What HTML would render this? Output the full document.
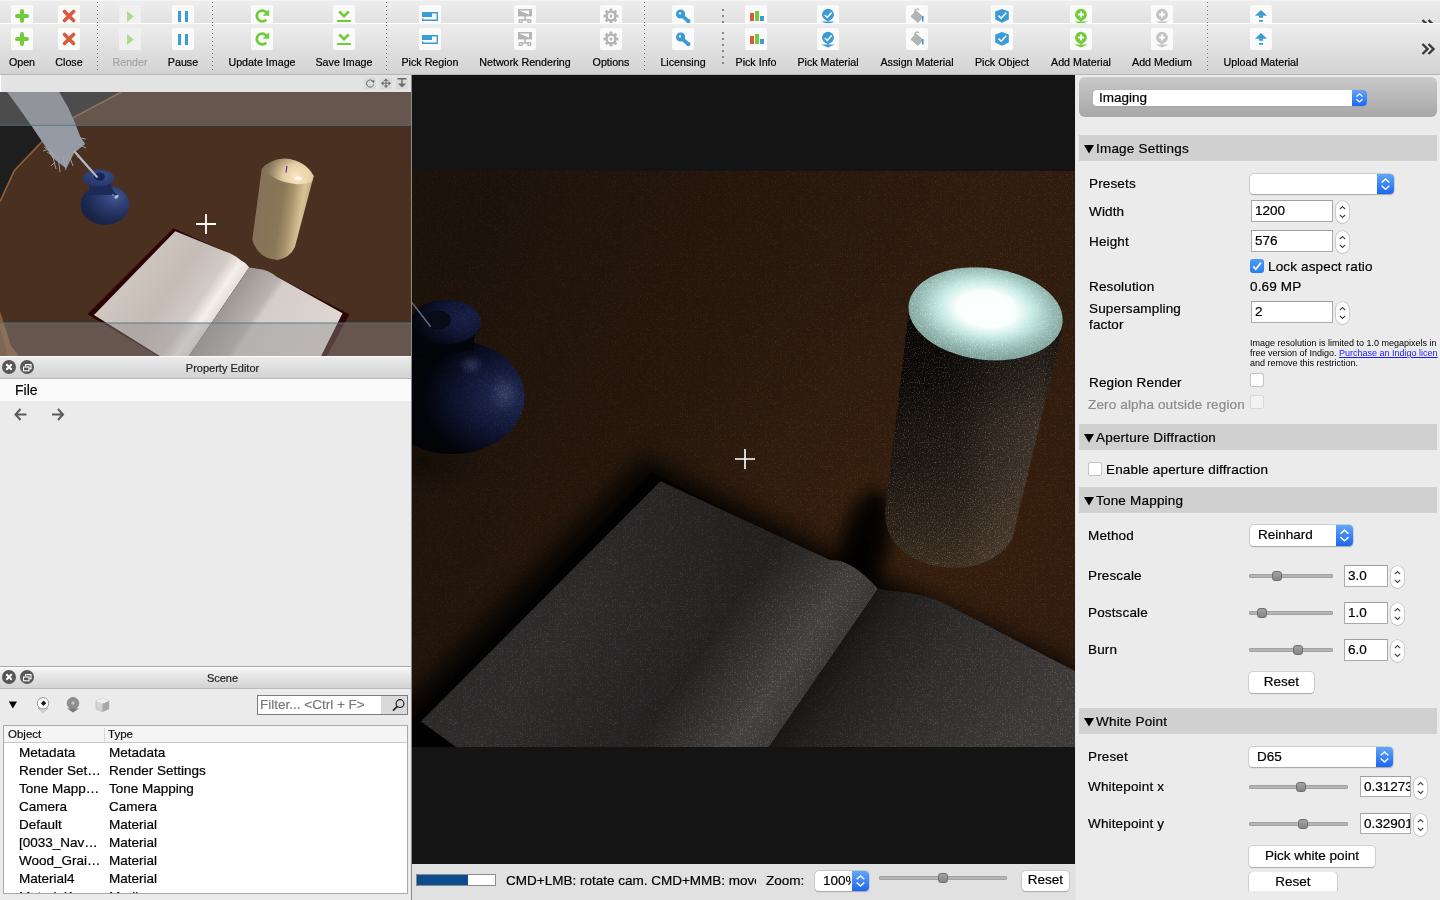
<!DOCTYPE html>
<html><head><meta charset="utf-8">
<style>
*{box-sizing:border-box;margin:0;padding:0}
html,body{width:1440px;height:900px;overflow:hidden;background:#ebebeb;font-family:"Liberation Sans",sans-serif;color:#000;-webkit-text-stroke-width:0.2px}
.a{position:absolute}
/* toolbar */
.tbwrap{position:absolute;left:0;width:1440px;overflow:hidden}
.tb{position:absolute;left:0;top:0;width:1440px;height:50px;background:linear-gradient(#ededed,#d3d3d3)}
.ib{position:absolute;top:4px;width:22px;height:22px;background:#fafafa;border-radius:2px}
.ib.dis{background:#f0f0f0}
.lb{position:absolute;top:32px;font-size:10.7px;white-space:nowrap;transform:translateX(-50%);line-height:13px}
.sep{position:absolute;top:1px;width:1px;height:46px;background:repeating-linear-gradient(#777 0 1px,transparent 1px 4px)}
.ib svg{position:absolute;left:0;top:0}
.sep2{position:absolute;top:8px;width:2px;height:32px;background:repeating-linear-gradient(#8a8a8a 0 2px,transparent 2px 6px)}

.gbox{position:absolute;left:1079px;top:77px;width:358px;height:40px;border-radius:6px;background:linear-gradient(#c9c9c9,#a7a7a7)}
.cb{position:absolute;background:#fff;border-radius:4px;box-shadow:0 0 0 0.5px #b8b8b8,0 0.5px 1px #999;font-size:13.5px;overflow:hidden}
.cbb{position:absolute;right:0;top:0;bottom:0;background:linear-gradient(#62a6f9,#1c66f2)}
.cbb svg{position:absolute;left:0;top:0}
.in{position:absolute;background:#fff;border:1px solid #ababab;border-top-color:#9f9f9f;font-size:13.5px;overflow:hidden;white-space:nowrap}
.in span{position:absolute;left:3px;top:2px;line-height:16px}
.sp{position:absolute;width:13px;height:22px;background:#fff;border-radius:6.5px;box-shadow:0 0 0 0.6px #bdbdbd,0 0.5px 1px #aaa}
.sp svg{position:absolute;left:0;top:0}
.sl{position:absolute;height:4px;background:#b5b5b5;border:0.5px solid #a2a2a2;border-radius:1px}
.th{position:absolute;width:10px;height:10px;border-radius:3px;background:linear-gradient(#a3a3a3,#858585);border:1px solid #6f6f6f}
.ck{position:absolute;width:14px;height:14px;border-radius:3px;background:#fff;box-shadow:inset 0 0 0 0.7px #b0b0b0}
.ck.dis{background:#f2f2f2;box-shadow:inset 0 0 0 0.7px #cfcfcf}
.ck.on{background:linear-gradient(#4b9bf8,#2a7cf4);box-shadow:none}
.ck svg{position:absolute;left:0;top:0}
.bt{position:absolute;background:#fff;border-radius:4px;box-shadow:0 0 0 0.6px #bdbdbd,0 0.6px 1px #9a9a9a;font-size:13.5px;text-align:center}
.rl{position:absolute;font-size:13.5px;line-height:16px;white-space:nowrap;letter-spacing:0.15px}
.sh{position:absolute;left:1079px;width:358px;height:26px;background:#d0d0d0;font-size:13.5px;letter-spacing:0.2px}
.sh .tri{position:absolute;left:5px;top:9px}
.sh span{position:absolute;left:17px;top:5.5px;line-height:16px}
.small{position:absolute;font-size:9px;line-height:10px;white-space:nowrap;-webkit-text-stroke-width:0}

.pt{position:absolute;left:0;width:445px;text-align:center;font-size:11px;line-height:14px;color:#222}
.th2{position:absolute;font-size:11.5px;line-height:16px;color:#111}
.tr{position:absolute;font-size:13.5px;line-height:17px;white-space:nowrap}
</style></head><body>

<!-- top clipped toolbar copy -->
<div class="tbwrap" style="top:0;height:23px;border-top:1px solid #f4f4f4">
 <div class="tb" id="tb1" style="top:0px"><div class="ib" style="left:11px"><svg width="22" height="22" viewBox="0 0 22 22"><path d="M11 6V16M6 11H16" stroke="#72cc3a" stroke-width="4" stroke-linecap="round"/></svg></div><div class="lb" style="left:22px">Open</div><div class="ib" style="left:58px"><svg width="22" height="22" viewBox="0 0 22 22"><path d="M6.5 6.5L15.5 15.5M15.5 6.5L6.5 15.5" stroke="#d85a3c" stroke-width="3.6" stroke-linecap="round"/></svg></div><div class="lb" style="left:69px">Close</div><div class="ib dis" style="left:119px"><svg width="22" height="22" viewBox="0 0 22 22"><path d="M8 6L15 11.5L8 17Z" fill="#acdc8c"/></svg></div><div class="lb" style="left:130px;color:#a5a5a5">Render</div><div class="ib" style="left:172px"><svg width="22" height="22" viewBox="0 0 22 22"><path d="M6 6h3v11H6zM13 6h3v11h-3z" fill="#3a9bd5"/></svg></div><div class="lb" style="left:183px">Pause</div><div class="ib" style="left:251px"><svg width="22" height="22" viewBox="0 0 22 22"><path d="M15.2 14.6A5.4 5.4 0 1 1 15.6 7.8" stroke="#72cc3a" stroke-width="2.8" fill="none"/><path d="M18.2 4.2V10.8H11.6Z" fill="#72cc3a"/></svg></div><div class="lb" style="left:262px">Update Image</div><div class="ib" style="left:333px"><svg width="22" height="22" viewBox="0 0 22 22"><path d="M6.3 6.5L11 11.2L15.7 6.5" stroke="#72cc3a" stroke-width="2.6" fill="none"/><path d="M4 15h14v2H4z" fill="#72cc3a"/></svg></div><div class="lb" style="left:344px">Save Image</div><div class="ib" style="left:419px"><svg width="22" height="22" viewBox="0 0 22 22"><path d="M3 7h10v5H3z" fill="#3a9bd5"/><path d="M13 7.7H18.3V15.3H3.7V13.5" stroke="#3a9bd5" stroke-width="1.4" fill="none"/></svg></div><div class="lb" style="left:430px">Pick Region</div><div class="ib" style="left:514px"><svg width="22" height="22" viewBox="0 0 22 22"><path d="M4 4h14v7.4H4z" fill="#b4b4b4"/><path d="M5 5.5L15 9.5V5.5Z" fill="#fafafa"/><path d="M10.2 11h1.6v4h-1.6zM6 14.3h10v1.4H6z" fill="#b4b4b4"/><path d="M4.7 14.3h4v3.6h-4zM13.3 14.3h4v3.6h-4z" fill="#b4b4b4"/><path d="M6 15.5h1.4v1.2H6zM14.6 15.5h1.4v1.2h-1.4z" fill="#fafafa"/></svg></div><div class="lb" style="left:525px">Network Rendering</div><div class="ib" style="left:600px"><svg width="22" height="22" viewBox="0 0 22 22"><g fill="#b4b4b4"><circle cx="11" cy="11" r="5.6"/><g id="t"><rect x="9.6" y="3.6" width="2.8" height="14.8"/></g><rect x="9.6" y="3.6" width="2.8" height="14.8" transform="rotate(45 11 11)"/><rect x="9.6" y="3.6" width="2.8" height="14.8" transform="rotate(90 11 11)"/><rect x="9.6" y="3.6" width="2.8" height="14.8" transform="rotate(135 11 11)"/></g><circle cx="11" cy="11" r="3.2" fill="#fafafa"/><circle cx="11" cy="11" r="1.5" fill="#b4b4b4"/></svg></div><div class="lb" style="left:611px">Options</div><div class="ib" style="left:672px"><svg width="22" height="22" viewBox="0 0 22 22"><circle cx="8.6" cy="9" r="4.6" fill="#3a9bd5"/><path d="M10.5 11.2L17.5 17.2" stroke="#3a9bd5" stroke-width="3.6"/><rect x="14.5" y="14.5" width="3.6" height="3.2" fill="#3a9bd5"/><circle cx="8" cy="8.4" r="1.1" fill="#fff"/></svg></div><div class="lb" style="left:683px">Licensing</div><div class="ib" style="left:745px"><svg width="22" height="22" viewBox="0 0 22 22"><path d="M5 8h4v8H5z" fill="#d85a3c"/><path d="M10 6h4v10h-4z" fill="#72cc3a"/><path d="M15 11h4v5h-4z" fill="#3a9bd5"/></svg></div><div class="lb" style="left:756px">Pick Info</div><div class="ib" style="left:817px"><svg width="22" height="22" viewBox="0 0 22 22"><circle cx="11" cy="9.6" r="5.9" fill="#3a9bd5"/><path d="M4.3 16.4H17.7L11 19.4Z" fill="#3a9bd5"/><path d="M8.2 14L11 17L13.8 14Z" fill="#3a9bd5"/><path d="M7.8 10L10.3 12.5L14.6 7.6" stroke="#fff" stroke-width="1.5" fill="none"/></svg></div><div class="lb" style="left:828px">Pick Material</div><div class="ib" style="left:906px"><svg width="22" height="22" viewBox="0 0 22 22"><path d="M10 5.8L17 12L12 17.6L5 11.4Z" fill="#b4b4b4" stroke="#b4b4b4" stroke-width="1" stroke-linejoin="round"/><path d="M9.2 7.2A2.2 2.2 0 0 1 13 5" stroke="#b4b4b4" stroke-width="1.3" fill="none"/><path d="M16 11h1.6v5.5H16z" fill="#3a9bd5"/></svg></div><div class="lb" style="left:917px">Assign Material</div><div class="ib" style="left:991px"><svg width="22" height="22" viewBox="0 0 22 22"><path d="M11 4L17.8 6.6V14.6L11 17.8L4.2 14.6V6.6Z" fill="#3a9bd5"/><path d="M7.5 10.6L10.2 13.2L15.2 7.8" stroke="#fff" stroke-width="1.5" fill="none"/></svg></div><div class="lb" style="left:1002px">Pick Object</div><div class="ib" style="left:1070px"><svg width="22" height="22" viewBox="0 0 22 22"><circle cx="11" cy="9.6" r="5.9" fill="#72cc3a"/><path d="M4.3 16.4H17.7L11 19.4Z" fill="#72cc3a"/><path d="M8.2 14L11 17L13.8 14Z" fill="#72cc3a"/><path d="M11 6.6V12.4M8.1 9.5H13.9" stroke="#fff" stroke-width="1.8"/></svg></div><div class="lb" style="left:1081px">Add Material</div><div class="ib" style="left:1151px"><svg width="22" height="22" viewBox="0 0 22 22"><circle cx="11" cy="9.6" r="5.9" fill="#c4c4c4"/><path d="M4.3 16.4H17.7L11 19.4Z" fill="#c4c4c4"/><path d="M8.2 14L11 17L13.8 14Z" fill="#c4c4c4"/><path d="M11 6.6V12.4M8.1 9.5H13.9" stroke="#fff" stroke-width="1.8"/></svg></div><div class="lb" style="left:1162px">Add Medium</div><div class="ib" style="left:1250px"><svg width="22" height="22" viewBox="0 0 22 22"><path d="M11 5L5 10.8H17Z" fill="#3a9bd5"/><path d="M9 10.5h4v2.3H9zM9 15h4v1.8H9z" fill="#3a9bd5"/></svg></div><div class="lb" style="left:1261px">Upload Material</div><div class="sep" style="left:97px"></div><div class="sep" style="left:212px"></div><div class="sep" style="left:386px"></div><div class="sep" style="left:644px"></div><div class="sep" style="left:1207px"></div><div class="sep2" style="left:722px"></div></div>
</div>
<div class="a" style="left:0;top:23px;width:1440px;height:1px;background:#fff"></div>
<div class="tbwrap" style="top:24px;height:51px">
 <div class="tb" id="tb2" style="top:0;border-bottom:1px solid #b5b5b5;height:51px"><div class="ib" style="left:11px"><svg width="22" height="22" viewBox="0 0 22 22"><path d="M11 6V16M6 11H16" stroke="#72cc3a" stroke-width="4" stroke-linecap="round"/></svg></div><div class="lb" style="left:22px">Open</div><div class="ib" style="left:58px"><svg width="22" height="22" viewBox="0 0 22 22"><path d="M6.5 6.5L15.5 15.5M15.5 6.5L6.5 15.5" stroke="#d85a3c" stroke-width="3.6" stroke-linecap="round"/></svg></div><div class="lb" style="left:69px">Close</div><div class="ib dis" style="left:119px"><svg width="22" height="22" viewBox="0 0 22 22"><path d="M8 6L15 11.5L8 17Z" fill="#acdc8c"/></svg></div><div class="lb" style="left:130px;color:#a5a5a5">Render</div><div class="ib" style="left:172px"><svg width="22" height="22" viewBox="0 0 22 22"><path d="M6 6h3v11H6zM13 6h3v11h-3z" fill="#3a9bd5"/></svg></div><div class="lb" style="left:183px">Pause</div><div class="ib" style="left:251px"><svg width="22" height="22" viewBox="0 0 22 22"><path d="M15.2 14.6A5.4 5.4 0 1 1 15.6 7.8" stroke="#72cc3a" stroke-width="2.8" fill="none"/><path d="M18.2 4.2V10.8H11.6Z" fill="#72cc3a"/></svg></div><div class="lb" style="left:262px">Update Image</div><div class="ib" style="left:333px"><svg width="22" height="22" viewBox="0 0 22 22"><path d="M6.3 6.5L11 11.2L15.7 6.5" stroke="#72cc3a" stroke-width="2.6" fill="none"/><path d="M4 15h14v2H4z" fill="#72cc3a"/></svg></div><div class="lb" style="left:344px">Save Image</div><div class="ib" style="left:419px"><svg width="22" height="22" viewBox="0 0 22 22"><path d="M3 7h10v5H3z" fill="#3a9bd5"/><path d="M13 7.7H18.3V15.3H3.7V13.5" stroke="#3a9bd5" stroke-width="1.4" fill="none"/></svg></div><div class="lb" style="left:430px">Pick Region</div><div class="ib" style="left:514px"><svg width="22" height="22" viewBox="0 0 22 22"><path d="M4 4h14v7.4H4z" fill="#b4b4b4"/><path d="M5 5.5L15 9.5V5.5Z" fill="#fafafa"/><path d="M10.2 11h1.6v4h-1.6zM6 14.3h10v1.4H6z" fill="#b4b4b4"/><path d="M4.7 14.3h4v3.6h-4zM13.3 14.3h4v3.6h-4z" fill="#b4b4b4"/><path d="M6 15.5h1.4v1.2H6zM14.6 15.5h1.4v1.2h-1.4z" fill="#fafafa"/></svg></div><div class="lb" style="left:525px">Network Rendering</div><div class="ib" style="left:600px"><svg width="22" height="22" viewBox="0 0 22 22"><g fill="#b4b4b4"><circle cx="11" cy="11" r="5.6"/><g id="t"><rect x="9.6" y="3.6" width="2.8" height="14.8"/></g><rect x="9.6" y="3.6" width="2.8" height="14.8" transform="rotate(45 11 11)"/><rect x="9.6" y="3.6" width="2.8" height="14.8" transform="rotate(90 11 11)"/><rect x="9.6" y="3.6" width="2.8" height="14.8" transform="rotate(135 11 11)"/></g><circle cx="11" cy="11" r="3.2" fill="#fafafa"/><circle cx="11" cy="11" r="1.5" fill="#b4b4b4"/></svg></div><div class="lb" style="left:611px">Options</div><div class="ib" style="left:672px"><svg width="22" height="22" viewBox="0 0 22 22"><circle cx="8.6" cy="9" r="4.6" fill="#3a9bd5"/><path d="M10.5 11.2L17.5 17.2" stroke="#3a9bd5" stroke-width="3.6"/><rect x="14.5" y="14.5" width="3.6" height="3.2" fill="#3a9bd5"/><circle cx="8" cy="8.4" r="1.1" fill="#fff"/></svg></div><div class="lb" style="left:683px">Licensing</div><div class="ib" style="left:745px"><svg width="22" height="22" viewBox="0 0 22 22"><path d="M5 8h4v8H5z" fill="#d85a3c"/><path d="M10 6h4v10h-4z" fill="#72cc3a"/><path d="M15 11h4v5h-4z" fill="#3a9bd5"/></svg></div><div class="lb" style="left:756px">Pick Info</div><div class="ib" style="left:817px"><svg width="22" height="22" viewBox="0 0 22 22"><circle cx="11" cy="9.6" r="5.9" fill="#3a9bd5"/><path d="M4.3 16.4H17.7L11 19.4Z" fill="#3a9bd5"/><path d="M8.2 14L11 17L13.8 14Z" fill="#3a9bd5"/><path d="M7.8 10L10.3 12.5L14.6 7.6" stroke="#fff" stroke-width="1.5" fill="none"/></svg></div><div class="lb" style="left:828px">Pick Material</div><div class="ib" style="left:906px"><svg width="22" height="22" viewBox="0 0 22 22"><path d="M10 5.8L17 12L12 17.6L5 11.4Z" fill="#b4b4b4" stroke="#b4b4b4" stroke-width="1" stroke-linejoin="round"/><path d="M9.2 7.2A2.2 2.2 0 0 1 13 5" stroke="#b4b4b4" stroke-width="1.3" fill="none"/><path d="M16 11h1.6v5.5H16z" fill="#3a9bd5"/></svg></div><div class="lb" style="left:917px">Assign Material</div><div class="ib" style="left:991px"><svg width="22" height="22" viewBox="0 0 22 22"><path d="M11 4L17.8 6.6V14.6L11 17.8L4.2 14.6V6.6Z" fill="#3a9bd5"/><path d="M7.5 10.6L10.2 13.2L15.2 7.8" stroke="#fff" stroke-width="1.5" fill="none"/></svg></div><div class="lb" style="left:1002px">Pick Object</div><div class="ib" style="left:1070px"><svg width="22" height="22" viewBox="0 0 22 22"><circle cx="11" cy="9.6" r="5.9" fill="#72cc3a"/><path d="M4.3 16.4H17.7L11 19.4Z" fill="#72cc3a"/><path d="M8.2 14L11 17L13.8 14Z" fill="#72cc3a"/><path d="M11 6.6V12.4M8.1 9.5H13.9" stroke="#fff" stroke-width="1.8"/></svg></div><div class="lb" style="left:1081px">Add Material</div><div class="ib" style="left:1151px"><svg width="22" height="22" viewBox="0 0 22 22"><circle cx="11" cy="9.6" r="5.9" fill="#c4c4c4"/><path d="M4.3 16.4H17.7L11 19.4Z" fill="#c4c4c4"/><path d="M8.2 14L11 17L13.8 14Z" fill="#c4c4c4"/><path d="M11 6.6V12.4M8.1 9.5H13.9" stroke="#fff" stroke-width="1.8"/></svg></div><div class="lb" style="left:1162px">Add Medium</div><div class="ib" style="left:1250px"><svg width="22" height="22" viewBox="0 0 22 22"><path d="M11 5L5 10.8H17Z" fill="#3a9bd5"/><path d="M9 10.5h4v2.3H9zM9 15h4v1.8H9z" fill="#3a9bd5"/></svg></div><div class="lb" style="left:1261px">Upload Material</div><div class="sep" style="left:97px"></div><div class="sep" style="left:212px"></div><div class="sep" style="left:386px"></div><div class="sep" style="left:644px"></div><div class="sep" style="left:1207px"></div><div class="sep2" style="left:722px"></div></div>
</div>

<!-- LEFT PANEL -->
<div class="a" style="left:0;top:75px;width:411px;height:17px;background:#e3e3e3;border-left:1px solid #fff"></div>
<div class="a" style="left:411px;top:75px;width:1px;height:825px;background:#8a8a8a"></div>
<div class="a" id="vp" style="left:0;top:92px;width:411px;height:264px;background:#4a3020;overflow:hidden"></div>
<svg class="a" style="left:0;top:92px" width="411" height="264" viewBox="0 0 411 264">
<defs>
 <linearGradient id="cand" gradientUnits="userSpaceOnUse" x1="254" y1="110" x2="308" y2="118">
  <stop offset="0" stop-color="#84715a"/><stop offset="0.5" stop-color="#8a7757"/><stop offset="0.68" stop-color="#a8926c"/><stop offset="0.88" stop-color="#d8c295"/><stop offset="1" stop-color="#c2ac82"/>
 </linearGradient>
 <radialGradient id="candtop" gradientUnits="userSpaceOnUse" cx="298" cy="84" r="30">
  <stop offset="0" stop-color="#fbe9c4" stop-opacity="1"/><stop offset="0.45" stop-color="#ecd6aa" stop-opacity="0.9"/><stop offset="1" stop-color="#d8c298" stop-opacity="0"/>
 </radialGradient>
 <radialGradient id="ink2" cx="0.7" cy="0.3" r="0.8">
  <stop offset="0" stop-color="#44578e"/><stop offset="0.35" stop-color="#2c3d72"/><stop offset="0.75" stop-color="#1c2850"/><stop offset="1" stop-color="#162040"/>
 </radialGradient>
 <radialGradient id="inkn" cx="0.6" cy="0.3" r="0.8">
  <stop offset="0" stop-color="#3a4c86"/><stop offset="1" stop-color="#233366"/>
 </radialGradient>
 <linearGradient id="pg1" gradientUnits="userSpaceOnUse" x1="165.2" y1="112.8" x2="251.9" y2="172">
  <stop offset="0" stop-color="#d0c8c2"/><stop offset="0.5" stop-color="#c5bcb6"/><stop offset="0.78" stop-color="#d2cac5"/><stop offset="0.9" stop-color="#f5f0ec"/><stop offset="1" stop-color="#e4ddd8"/>
 </linearGradient>
 <linearGradient id="pg2" gradientUnits="userSpaceOnUse" x1="251.9" y1="172" x2="337" y2="230">
  <stop offset="0" stop-color="#9d9793"/><stop offset="0.3" stop-color="#bab3af"/><stop offset="0.36" stop-color="#d4cdc8"/><stop offset="1" stop-color="#ddd6d1"/>
 </linearGradient>
</defs>
<rect width="411" height="264" fill="#4a3020"/>
<path d="M0 0 H121.5 L72.6 26 L45.8 45.7 L14.2 78.8 L0 109.6Z" fill="#1e1e1e"/>
<path d="M121.5 0 L72.6 26 L45.8 45.7 L14.2 78.8 L0 109.6" fill="none" stroke="#8e6038" stroke-width="1.6"/>
<path d="M0 219.3 L3.3 229.5 L11 253.7 L19 264 H0Z" fill="#8a5a34"/><path d="M0 236 L4 250 L8 264 H0Z" fill="#5a3c28" opacity="0.5"/>
<!-- quill -->
<path d="M7.1 0 H59.2 L67.9 14.9 L74.2 29.1 L80.5 44.9 L85.2 52 L74.2 60.7 L66.3 76.5 L52.1 65.4 L44.2 52.8 L31.6 33.9 L15.8 11.8Z" fill="#959aa4"/>
<path d="M44 55 L56 64 M47 60 L57 66 M52 61 L56 77 M58 64 L60 80 M63 64 L66 78 M69 63 L73 74 M78 52 L86 56 M80 46 L86 47 M49 57 L43 59 M55 70 L51 74 M75 60 L79 66" stroke="#a0a5ae" stroke-width="0.9"/>
<path d="M74.2 59.1 L97.8 86" stroke="#b2b6be" stroke-width="2"/>
<!-- inkwell -->
<ellipse cx="105" cy="112.8" rx="24.5" ry="20" fill="url(#ink2)"/>
<path d="M85 87 Q92 94 88 103 L118 103 Q108 96 113 87Z" fill="#1d2a58"/>
<ellipse cx="98.6" cy="86" rx="15.6" ry="8.6" fill="url(#inkn)"/>
<ellipse cx="99.4" cy="84.6" rx="5.5" ry="4" fill="#182452"/>
<path d="M74.2 59.1 L97.5 85.5" stroke="#b2b6be" stroke-width="2"/>
<ellipse cx="116.5" cy="104.8" rx="2.4" ry="1.6" fill="#a8b6dc" transform="rotate(-30 116.5 104.8)"/>
<ellipse cx="113" cy="103" rx="1.2" ry="0.8" fill="#8898c4"/>
<!-- candle -->
<path d="M261.7 76.9 Q270 67 284.8 66.5 Q305 68 313.7 84.1 L294.9 154.9 Q290 166 277.6 167.9 Q258 167 252.3 147.7 Z" fill="url(#cand)"/>
<clipPath id="candclip"><path d="M261.7 76.9 Q270 67 284.8 66.5 Q305 68 313.7 84.1 L294.9 154.9 Q290 166 277.6 167.9 Q258 167 252.3 147.7 Z"/></clipPath>
<g clip-path="url(#candclip)"><ellipse cx="290" cy="78" rx="27" ry="13" transform="rotate(14 290 78)" fill="url(#candtop)"/></g>
<ellipse cx="298.4" cy="86.3" rx="3.6" ry="1.9" fill="#fffaf0"/>
<path d="M287 74 L286 80.5" stroke="#5a20a8" stroke-width="1.1"/>
<!-- book -->
<path d="M173.3 136.2 L87.4 222.3 L157.8 264 H326.9 L349.3 222.3 L276.4 184.4 L249.2 175.6 L223.9 159.1Z" fill="#2c0505"/>
<path d="M175.3 139.3 L94 222.9 L159.7 264 H188.9 L249.2 175.6 Q245 170 241.4 168.8 Q234 162 223.9 159.1 Z" fill="url(#pg1)"/>
<path d="M249.2 175.6 L188.9 264 H321.1 L342.5 221.3 L276.4 184.4 Q268 178 258.9 177 Z" fill="url(#pg2)"/>
<!-- overlay bands -->
<rect x="0" y="0" width="411" height="33" fill="#8c8c8c" opacity="0.42"/>
<rect x="0" y="231" width="411" height="33" fill="#8c8c8c" opacity="0.42"/>
<path d="M0 33.3H411M0 231H411" stroke="#4f7584" stroke-width="0.9"/>
<path d="M206 122V142M196 132H216" stroke="#fff" stroke-width="1.8"/>
</svg>

<!-- property editor -->
<div class="a" style="left:0;top:356px;width:411px;height:1px;background:#fff"></div>
<div class="a" style="left:0;top:357px;width:411px;height:22px;background:linear-gradient(#ececec,#d2d2d2);border-bottom:1px solid #b9b9b9"></div>
<div class="a" style="left:0;top:379px;width:411px;height:22px;background:#fafafa"></div>
<div class="a" style="left:15px;top:382px;font-size:14px">File</div>

<!-- scene -->
<div class="a" style="left:0;top:666px;width:411px;height:1px;background:#a8a8a8"></div>
<div class="a" style="left:0;top:667px;width:411px;height:22px;background:linear-gradient(#f4f4f4,#d2d2d2);border-top:1px solid #fff;border-bottom:1px solid #b9b9b9"></div>
<div class="a" style="left:3px;top:725px;width:405px;height:169px;background:#fff;border:1px solid #a9a9a9"></div>

<svg class="a" style="left:363px;top:77px" width="47" height="13" viewBox="0 0 47 13"><rect x="1" y="0.5" width="12" height="11.5" rx="1" fill="#dadada"/><rect x="17" y="0.5" width="12" height="11.5" rx="1" fill="#dadada"/><rect x="33" y="0.5" width="12" height="11.5" rx="1" fill="#dadada"/><path d="M10.2 4.6A3.6 3.6 0 1 0 10.6 7.6" stroke="#6a6a6a" stroke-width="1" fill="none"/><path d="M8.4 4.2L11.4 3L11 6.2Z" fill="#6a6a6a"/><path d="M23 1.5L25.3 4H20.7ZM23 11L25.3 8.5H20.7ZM18 6.2L20.5 3.9V8.5ZM28 6.2L25.5 3.9V8.5Z" fill="#6a6a6a"/><path d="M20 6.2H26M23 3V9.5" stroke="#6a6a6a" stroke-width="1"/><path d="M34.5 1.8H43.5M39 2V9" stroke="#6a6a6a" stroke-width="1.4"/><path d="M35 6.5H43L39 10.5Z" fill="#6a6a6a"/></svg><svg class="a" style="left:1px;top:359px" width="36" height="16" viewBox="0 0 36 16"><circle cx="8" cy="8" r="7" fill="#575757"/><path d="M5.3 5.3L10.7 10.7M10.7 5.3L5.3 10.7" stroke="#fff" stroke-width="2"/><circle cx="26" cy="8" r="7" fill="#575757"/><rect x="22.5" y="8" width="5.5" height="3.8" fill="none" stroke="#fff" stroke-width="1.1"/><path d="M24.5 7.6V5.6H30V9.6H28.4" fill="none" stroke="#fff" stroke-width="1.1"/></svg><div class="pt" style="top:361px">Property Editor</div><svg class="a" style="left:14px;top:408px" width="52" height="13" viewBox="0 0 52 13"><path d="M1.5 6.5H12.5M6.5 1L1.5 6.5L6.5 12" stroke="#5a5a5a" stroke-width="2" fill="none"/><path d="M38 6.5H49M44 1L49 6.5L44 12" stroke="#5a5a5a" stroke-width="2" fill="none"/></svg><svg class="a" style="left:1px;top:669px" width="36" height="16" viewBox="0 0 36 16"><circle cx="8" cy="8" r="7" fill="#575757"/><path d="M5.3 5.3L10.7 10.7M10.7 5.3L5.3 10.7" stroke="#fff" stroke-width="2"/><circle cx="26" cy="8" r="7" fill="#575757"/><rect x="22.5" y="8" width="5.5" height="3.8" fill="none" stroke="#fff" stroke-width="1.1"/><path d="M24.5 7.6V5.6H30V9.6H28.4" fill="none" stroke="#fff" stroke-width="1.1"/></svg><div class="pt" style="top:671px">Scene</div><svg class="a" style="left:8px;top:697px" width="104" height="17" viewBox="0 0 104 17"><path d="M0.8 4.5H9L4.9 11.5Z" fill="#000"/><path d="M30 11.2L35 15.5L40 11.2Z" fill="#dcdcdc" stroke="#a0a0a0" stroke-width="0.6"/><circle cx="35" cy="6.3" r="5.7" fill="#fcfcfc" stroke="#8f8f8f" stroke-width="0.9"/><path d="M35.8 3.6L38.2 6.2L35.4 8.9L32.9 6.3Z" fill="#1a1a1a"/><path d="M59 11.5L65 15.5L71 11.5Z" fill="#7a7a7a"/><circle cx="65" cy="6.3" r="5.8" fill="#8f8f8f" stroke="#777" stroke-width="0.7"/><path d="M65 4L67 6L65 8L63 6Z" fill="#c4c4c4"/><path d="M88 4L94.5 1.3L101 4V12L94.5 14.7L88 12Z" fill="#d4d4d4" stroke="#b3b3b3" stroke-width="0.6"/><path d="M88 4L94.5 6.7L101 4L94.5 1.3Z" fill="#eeeeee"/><path d="M94.5 6.7V14.7L101 12V4Z" fill="#a8a8a8"/></svg><div class="a" style="left:257px;top:695px;width:151px;height:20px;background:#fff;border:1px solid #7c7c7c"></div><div class="a" style="left:381px;top:696px;width:26px;height:18px;background:#d9d9d9"></div><div class="a" style="left:260px;top:697px;font-size:13.5px;line-height:16px;color:#787878;white-space:nowrap">Filter... &lt;Ctrl + F&gt;</div><svg class="a" style="left:390px;top:697px" width="16" height="16" viewBox="0 0 16 16"><circle cx="10" cy="6.6" r="3.9" fill="none" stroke="#222" stroke-width="1.2"/><path d="M7.3 9.4L3 13.6" stroke="#222" stroke-width="1.6"/></svg><div class="a" style="left:4px;top:726px;width:403px;height:17px;background:#f5f5f5;border-bottom:1px solid #c9c9c9"></div><div class="a" style="left:104px;top:728px;width:1px;height:13px;background:#d8d8d8"></div><div class="th2" style="left:8px;top:726px">Object</div><div class="th2" style="left:108px;top:726px">Type</div><div class="a" style="left:4px;top:743px;width:403px;height:150px;overflow:hidden"><div class="tr" style="left:15px;top:0.5px">Metadata</div><div class="tr" style="left:105px;top:0.5px">Metadata</div><div class="tr" style="left:15px;top:18.5px">Render Set…</div><div class="tr" style="left:105px;top:18.5px">Render Settings</div><div class="tr" style="left:15px;top:36.5px">Tone Mapp…</div><div class="tr" style="left:105px;top:36.5px">Tone Mapping</div><div class="tr" style="left:15px;top:54.5px">Camera</div><div class="tr" style="left:105px;top:54.5px">Camera</div><div class="tr" style="left:15px;top:72.5px">Default</div><div class="tr" style="left:105px;top:72.5px">Material</div><div class="tr" style="left:15px;top:90.5px">[0033_Nav…</div><div class="tr" style="left:105px;top:90.5px">Material</div><div class="tr" style="left:15px;top:108.5px">Wood_Grai…</div><div class="tr" style="left:105px;top:108.5px">Material</div><div class="tr" style="left:15px;top:126.5px">Material4</div><div class="tr" style="left:105px;top:126.5px">Material</div><div class="tr" style="left:15px;top:144.5px">Material1</div><div class="tr" style="left:105px;top:144.5px">Medium</div></div>
<!-- CENTER -->
<div class="a" style="left:412px;top:75px;width:663px;height:789px;background:#141414"></div>
<div class="a" id="rv" style="left:412px;top:171px;width:663px;height:576px;background:#24160b;overflow:hidden"></div>
<svg class="a" style="left:412px;top:171px" width="663" height="576" viewBox="0 0 663 576">
<defs>
 <linearGradient id="wood" x1="0" y1="0.2" x2="1" y2="0.6">
  <stop offset="0" stop-color="#23160c"/><stop offset="0.4" stop-color="#2f1d0f"/><stop offset="0.75" stop-color="#3c2413"/><stop offset="1" stop-color="#3a2213"/>
 </linearGradient>
 <radialGradient id="woodlight" cx="0.8" cy="0.62" r="0.45">
  <stop offset="0" stop-color="#4a2a10" stop-opacity="0.5"/><stop offset="1" stop-color="#4a2a10" stop-opacity="0"/>
 </radialGradient>
 <radialGradient id="ink" cx="0.88" cy="0.5" r="0.8">
  <stop offset="0" stop-color="#283362"/><stop offset="0.25" stop-color="#1b244d"/><stop offset="0.5" stop-color="#0d1330"/><stop offset="0.72" stop-color="#03050c"/><stop offset="1" stop-color="#010203"/>
 </radialGradient>
 <radialGradient id="inkneck" cx="0.78" cy="0.4" r="0.85">
  <stop offset="0" stop-color="#1e2856"/><stop offset="0.45" stop-color="#131a3e"/><stop offset="0.8" stop-color="#070a18"/><stop offset="1" stop-color="#020308"/>
 </radialGradient>
 <radialGradient id="ctop" cx="0.5" cy="0.45" r="0.55">
  <stop offset="0" stop-color="#ffffff"/><stop offset="0.35" stop-color="#fafffd"/><stop offset="0.55" stop-color="#cfeee8"/><stop offset="0.8" stop-color="#a8c6c0"/><stop offset="1" stop-color="#94b0aa"/>
 </radialGradient>
 <linearGradient id="cbody" gradientUnits="userSpaceOnUse" x1="470" y1="0" x2="650" y2="0">
  <stop offset="0" stop-color="#14100d"/><stop offset="0.42" stop-color="#1d1814"/><stop offset="0.62" stop-color="#362d26"/><stop offset="0.88" stop-color="#4a3f35"/><stop offset="1" stop-color="#352b23"/>
 </linearGradient>
 <linearGradient id="cbodyv" gradientUnits="userSpaceOnUse" x1="0" y1="150" x2="0" y2="400">
  <stop offset="0" stop-color="#000" stop-opacity="0.6"/><stop offset="0.28" stop-color="#000" stop-opacity="0.25"/><stop offset="0.55" stop-color="#6a5440" stop-opacity="0.12"/><stop offset="1" stop-color="#8a6a4a" stop-opacity="0.42"/>
 </linearGradient>
 <linearGradient id="page1" gradientUnits="userSpaceOnUse" x1="263.4" y1="181.8" x2="511" y2="352.7">
  <stop offset="0" stop-color="#363433"/><stop offset="0.2" stop-color="#3a3837"/><stop offset="0.64" stop-color="#2d2b2a"/><stop offset="0.9" stop-color="#57534f"/><stop offset="1" stop-color="#4a4644"/>
 </linearGradient>
 <linearGradient id="page1v" gradientUnits="userSpaceOnUse" x1="0" y1="310" x2="0" y2="576">
  <stop offset="0" stop-color="#000" stop-opacity="0.15"/><stop offset="0.5" stop-color="#000" stop-opacity="0"/>
 </linearGradient>
 <linearGradient id="page2" gradientUnits="userSpaceOnUse" x1="511" y1="352.7" x2="682.8" y2="471.2">
  <stop offset="0" stop-color="#1e1c1b"/><stop offset="0.15" stop-color="#2c2a29"/><stop offset="0.45" stop-color="#3c3938"/><stop offset="1" stop-color="#4e4a48"/>
 </linearGradient>
 <radialGradient id="cshadow" cx="0.5" cy="0.5" r="0.5">
  <stop offset="0" stop-color="#000" stop-opacity="0.6"/><stop offset="1" stop-color="#000" stop-opacity="0"/>
 </radialGradient>
 <linearGradient id="bkshadow" gradientUnits="userSpaceOnUse" x1="300" y1="330" x2="270" y2="270">
  <stop offset="0" stop-color="#000" stop-opacity="0.45"/><stop offset="1" stop-color="#000" stop-opacity="0"/>
 </linearGradient>
 <filter id="grain" x="0" y="0" width="100%" height="100%">
  <feTurbulence type="turbulence" baseFrequency="1.6" numOctaves="1" seed="7" result="n"/>
  <feColorMatrix type="matrix" values="2.2 0 0 0 -0.6  2.2 0 0 0 -0.6  2.2 0 0 0 -0.6  0 0 0 0 1" in="n"/>
 </filter>
 <filter id="grainw" x="0" y="0" width="100%" height="100%">
  <feTurbulence type="fractalNoise" baseFrequency="0.8" numOctaves="1" seed="11" result="n"/>
  <feColorMatrix type="matrix" values="0 0 0 0 0.75  0 0 0 0 0.55  0 0 0 0 0.38  0 0 0 3 -1.6" in="n"/>
 </filter>
 <clipPath id="cclip"><path d="M496.6 143 L473.5 336 Q470 382 523 395 Q575 404 600 369 L650 160 Z"/></clipPath>
 <clipPath id="bclip"><path d="M248.6 310.3 L9 550.6 L0 576 L663 576 L663 500 L529.5 431 Q515 425 497 421.7 Q480 420 466 418 Q440 388 418 389 Z"/></clipPath>
 <radialGradient id="hl"><stop offset="0" stop-color="#56628f" stop-opacity="0.55"/><stop offset="1" stop-color="#56628f" stop-opacity="0"/></radialGradient>
 <filter id="blur12" x="-20%" y="-20%" width="140%" height="140%"><feGaussianBlur stdDeviation="11"/></filter>
 <filter id="blur8" x="-50%" y="-50%" width="200%" height="200%"><feGaussianBlur stdDeviation="8"/></filter>
</defs>
<rect width="663" height="576" fill="url(#wood)"/>
<rect width="663" height="576" fill="url(#woodlight)"/>
<!-- table shadows -->
<ellipse cx="452" cy="375" rx="24" ry="58" transform="rotate(15 452 375)" fill="#000" opacity="0.9" filter="url(#blur8)"/>
<path d="M-20 545 L232 285 L470 405 L663 495 V576 H-20Z" fill="#000" opacity="0.85" filter="url(#blur12)"/>
<ellipse cx="10" cy="290" rx="70" ry="35" fill="url(#cshadow)" opacity="0.6"/>
<!-- inkwell -->
<ellipse cx="40" cy="226" rx="72.5" ry="57" fill="url(#ink)"/>
<path d="M0 150 H69 Q60 166 62 180 L0 184Z" fill="#04060d"/>
<ellipse cx="34" cy="151" rx="35" ry="22.5" fill="url(#inkneck)"/>
<ellipse cx="26" cy="149" rx="13" ry="9.5" fill="#090d1c"/>
<path d="M0 131.6L18.6 155.7" stroke="#7d8494" stroke-width="1.5"/>
<ellipse cx="59" cy="194" rx="12" ry="10" fill="url(#hl)"/><ellipse cx="92" cy="222" rx="16" ry="20" fill="url(#hl)"/>
<!-- book cover + pages -->
<path d="M239.5 301 L-5 556 L0 576 L663 576 L663 507 L529 437 L466 420 Z" fill="#030202"/>
<path d="M248.6 310.3 L9 550.6 L44 576 L357 576 L466 418 Q440 388 418 389 Z" fill="url(#page1)"/>
<path d="M248.6 310.3 L9 550.6 L44 576 L357 576 L466 418 Q440 388 418 389 Z" fill="url(#page1v)"/>
<path d="M466 418 Q480 420 497 421.7 Q515 425 529.5 431 L663 500 L663 576 L357 576 Z" fill="url(#page2)"/>

<!-- candle -->
<path d="M496.6 143 L473.5 336 Q470 382 523 395 Q575 404 600 369 L650 160 Z" fill="url(#cbody)"/>
<path d="M496.6 143 L473.5 336 Q470 382 523 395 Q575 404 600 369 L650 160 Z" fill="url(#cbodyv)"/>
<g clip-path="url(#cclip)"><rect width="663" height="576" filter="url(#grainw)" opacity="0.4"/></g>
<ellipse cx="573.6" cy="142.8" rx="77.5" ry="46" transform="rotate(7 573.6 142.8)" fill="url(#ctop)"/>
<rect width="663" height="576" filter="url(#grain)" opacity="0.22" style="mix-blend-mode:overlay"/>
<path d="M333 278V298M323 288H343" stroke="#fff" stroke-width="1.6"/>
</svg>
<div class="a" style="left:412px;top:864px;width:663px;height:36px;background:#e1e1e1"></div>
<div class="a" style="left:416px;top:874px;width:80px;height:12px;background:#fff;border:1px solid #8a8a8a"></div><div class="a" style="left:417px;top:875px;width:51px;height:10px;background:#0b4a8c"></div><div class="a" style="left:506px;top:872px;width:250px;height:17px;overflow:hidden;white-space:nowrap;font-size:13.5px;line-height:17px">CMD+LMB: rotate cam. CMD+MMB: move cam.</div><div class="a" style="left:766px;top:872px;font-size:13.5px;line-height:17px">Zoom:</div><div class="cb" style="left:815px;top:871px;width:54px;height:20px"><span style="position:absolute;left:8px;top:1.5px;line-height:16px"></span><div class="cbb" style="width:17px"><svg width="17" height="20" viewBox="0 0 17 20"><path d="M4.69 8.29L8.50 4.86L12.31 8.29M4.69 11.52L8.50 14.95L12.31 11.52" stroke="#fff" stroke-width="1.43" fill="none"/></svg></div></div><div class="a" style="left:823px;top:872px;width:28px;height:17px;overflow:hidden;white-space:nowrap;font-size:13.5px;line-height:17px">100%</div><div class="sl" style="left:879px;top:876px;width:128px"></div><div class="th" style="left:937.5px;top:873px"></div><div class="bt" style="left:1022px;top:871px;width:47px;height:20px;line-height:18px">Reset</div>

<!-- RIGHT -->
<div class="a" style="left:1075px;top:75px;width:1px;height:825px;background:#e6e6e6"></div>
<div class="a" style="left:1076px;top:75px;width:364px;height:825px;background:#ebebeb"></div>
<div class="gbox"></div><div class="cb" style="left:1093px;top:90px;width:274px;height:16px"><span style="position:absolute;left:6px;top:-0.5px;line-height:16px">Imaging</span><div class="cbb" style="width:15px"><svg width="15" height="16" viewBox="0 0 15 16"><path d="M4.45 6.63L7.50 3.89L10.55 6.63M4.45 9.22L7.50 11.96L10.55 9.22" stroke="#fff" stroke-width="1.27" fill="none"/></svg></div></div><div class="sh" style="top:135px"><svg class="tri" width="10" height="10" viewBox="0 0 10 10"><path d="M0 1H10L5 9.5Z" fill="#000"/></svg><span>Image Settings</span></div><div class="rl" style="left:1089px;top:175.6px">Presets</div><div class="cb" style="left:1250px;top:173.5px;width:144px;height:20.5px"><span style="position:absolute;left:8px;top:1.75px;line-height:16px"></span><div class="cbb" style="width:17px"><svg width="17" height="20.5" viewBox="0 0 17 20.5"><path d="M4.60 8.49L8.50 4.98L12.40 8.49M4.60 11.81L8.50 15.33L12.40 11.81" stroke="#fff" stroke-width="1.46" fill="none"/></svg></div></div><div class="rl" style="left:1089px;top:203.6px">Width</div><div class="in" style="left:1251px;top:200px;width:82px;height:22px"><span>1200</span></div><div class="sp" style="left:1336px;top:201px"><svg width="13" height="22" viewBox="0 0 13 22"><path d="M3.8 8.2L6.5 5.5L9.2 8.2M3.8 13.8L6.5 16.5L9.2 13.8" stroke="#444" stroke-width="1.2" fill="none"/></svg></div><div class="rl" style="left:1089px;top:233.6px">Height</div><div class="in" style="left:1251px;top:230px;width:82px;height:22px"><span>576</span></div><div class="sp" style="left:1336px;top:231px"><svg width="13" height="22" viewBox="0 0 13 22"><path d="M3.8 8.2L6.5 5.5L9.2 8.2M3.8 13.8L6.5 16.5L9.2 13.8" stroke="#444" stroke-width="1.2" fill="none"/></svg></div><div class="ck on" style="left:1250px;top:259px"><svg width="14" height="14" viewBox="0 0 14 14"><path d="M3.2 7.4L5.8 10.2L11 3.6" stroke="#fff" stroke-width="1.7" fill="none"/></svg></div><div class="rl" style="left:1268px;top:258.6px">Lock aspect ratio</div><div class="rl" style="left:1089px;top:278.6px">Resolution</div><div class="rl" style="left:1250px;top:278.6px">0.69 MP</div><div class="rl" style="left:1089px;top:300.6px">Supersampling</div><div class="rl" style="left:1089px;top:316.6px">factor</div><div class="in" style="left:1251px;top:301px;width:82px;height:22px"><span>2</span></div><div class="sp" style="left:1336px;top:302px"><svg width="13" height="22" viewBox="0 0 13 22"><path d="M3.8 8.2L6.5 5.5L9.2 8.2M3.8 13.8L6.5 16.5L9.2 13.8" stroke="#444" stroke-width="1.2" fill="none"/></svg></div><div class="small" style="left:1250px;top:338px">Image resolution is limited to 1.0 megapixels in<br>free version of Indigo. <u style="color:#1a1aff">Purchase an Indigo licen</u><br>and remove this restriction.</div><div class="rl" style="left:1089px;top:374.6px">Region Render</div><div class="ck" style="left:1250px;top:373px"></div><div class="rl" style="left:1088px;top:396.6px;color:#8c8c8c">Zero alpha outside region</div><div class="ck dis" style="left:1250px;top:395px"></div><div class="sh" style="top:424px"><svg class="tri" width="10" height="10" viewBox="0 0 10 10"><path d="M0 1H10L5 9.5Z" fill="#000"/></svg><span>Aperture Diffraction</span></div><div class="ck" style="left:1088px;top:462px"></div><div class="rl" style="left:1106px;top:461.6px">Enable aperture diffraction</div><div class="sh" style="top:487px"><svg class="tri" width="10" height="10" viewBox="0 0 10 10"><path d="M0 1H10L5 9.5Z" fill="#000"/></svg><span>Tone Mapping</span></div><div class="rl" style="left:1088px;top:527.6px">Method</div><div class="cb" style="left:1250px;top:525px;width:103px;height:21px"><span style="position:absolute;left:8px;top:2.0px;line-height:16px">Reinhard</span><div class="cbb" style="width:17px"><svg width="17" height="21" viewBox="0 0 17 21"><path d="M4.50 8.70L8.50 5.10L12.50 8.70M4.50 12.10L8.50 15.70L12.50 12.10" stroke="#fff" stroke-width="1.50" fill="none"/></svg></div></div><div class="rl" style="left:1088px;top:568.1px">Prescale</div><div class="sl" style="left:1249px;top:573.5px;width:84px"></div><div class="th" style="left:1272px;top:570.5px"></div><div class="in" style="left:1344px;top:565px;width:44px;height:22px"><span>3.0</span></div><div class="sp" style="left:1391px;top:566px"><svg width="13" height="22" viewBox="0 0 13 22"><path d="M3.8 8.2L6.5 5.5L9.2 8.2M3.8 13.8L6.5 16.5L9.2 13.8" stroke="#444" stroke-width="1.2" fill="none"/></svg></div><div class="rl" style="left:1088px;top:605.1px">Postscale</div><div class="sl" style="left:1249px;top:610.5px;width:84px"></div><div class="th" style="left:1256.5px;top:607.5px"></div><div class="in" style="left:1344px;top:602px;width:44px;height:22px"><span>1.0</span></div><div class="sp" style="left:1391px;top:603px"><svg width="13" height="22" viewBox="0 0 13 22"><path d="M3.8 8.2L6.5 5.5L9.2 8.2M3.8 13.8L6.5 16.5L9.2 13.8" stroke="#444" stroke-width="1.2" fill="none"/></svg></div><div class="rl" style="left:1088px;top:642.1px">Burn</div><div class="sl" style="left:1249px;top:647.5px;width:84px"></div><div class="th" style="left:1292.5px;top:644.5px"></div><div class="in" style="left:1344px;top:639px;width:44px;height:22px"><span>6.0</span></div><div class="sp" style="left:1391px;top:640px"><svg width="13" height="22" viewBox="0 0 13 22"><path d="M3.8 8.2L6.5 5.5L9.2 8.2M3.8 13.8L6.5 16.5L9.2 13.8" stroke="#444" stroke-width="1.2" fill="none"/></svg></div><div class="bt" style="left:1249px;top:672px;width:65px;height:21px;line-height:19px">Reset</div><div class="sh" style="top:708px"><svg class="tri" width="10" height="10" viewBox="0 0 10 10"><path d="M0 1H10L5 9.5Z" fill="#000"/></svg><span>White Point</span></div><div class="rl" style="left:1088px;top:748.6px">Preset</div><div class="cb" style="left:1249px;top:747px;width:144px;height:20px"><span style="position:absolute;left:8px;top:1.5px;line-height:16px">D65</span><div class="cbb" style="width:17px"><svg width="17" height="20" viewBox="0 0 17 20"><path d="M4.69 8.29L8.50 4.86L12.31 8.29M4.69 11.52L8.50 14.95L12.31 11.52" stroke="#fff" stroke-width="1.43" fill="none"/></svg></div></div><div class="rl" style="left:1088px;top:779.1px">Whitepoint x</div><div class="sl" style="left:1249px;top:784.5px;width:99px"></div><div class="th" style="left:1296px;top:781.5px"></div><div class="in" style="left:1360px;top:776px;width:51px;height:21px"><span>0.31273</span></div><div class="sp" style="left:1414px;top:777px"><svg width="13" height="22" viewBox="0 0 13 22"><path d="M3.8 8.2L6.5 5.5L9.2 8.2M3.8 13.8L6.5 16.5L9.2 13.8" stroke="#444" stroke-width="1.2" fill="none"/></svg></div><div class="rl" style="left:1088px;top:816.1px">Whitepoint y</div><div class="sl" style="left:1249px;top:821.5px;width:99px"></div><div class="th" style="left:1297.5px;top:818.5px"></div><div class="in" style="left:1360px;top:813px;width:51px;height:21px"><span>0.32901</span></div><div class="sp" style="left:1414px;top:814px"><svg width="13" height="22" viewBox="0 0 13 22"><path d="M3.8 8.2L6.5 5.5L9.2 8.2M3.8 13.8L6.5 16.5L9.2 13.8" stroke="#444" stroke-width="1.2" fill="none"/></svg></div><div class="bt" style="left:1249px;top:846px;width:126px;height:21px;line-height:19px">Pick white point</div><div class="a" style="left:1240px;top:872px;width:110px;height:19px;overflow:hidden"><div class="bt"  style="left:9px;top:0px;width:88px;height:21px;line-height:19px">Reset</div></div>
<svg class="a" style="left:1420px;top:42px" width="18" height="14" viewBox="0 0 18 14"><path d="M2.5 2L7.5 7L2.5 12M8.5 2L13.5 7L8.5 12" stroke="#3a3a3a" stroke-width="2.4" fill="none"/></svg>
<div class="a" style="left:1420px;top:0;width:18px;height:23px;overflow:hidden"><svg class="a" style="left:0;top:18px" width="18" height="14" viewBox="0 0 18 14"><path d="M2.5 2L7.5 7L2.5 12M8.5 2L13.5 7L8.5 12" stroke="#3a3a3a" stroke-width="2.4" fill="none"/></svg></div>
</body></html>
